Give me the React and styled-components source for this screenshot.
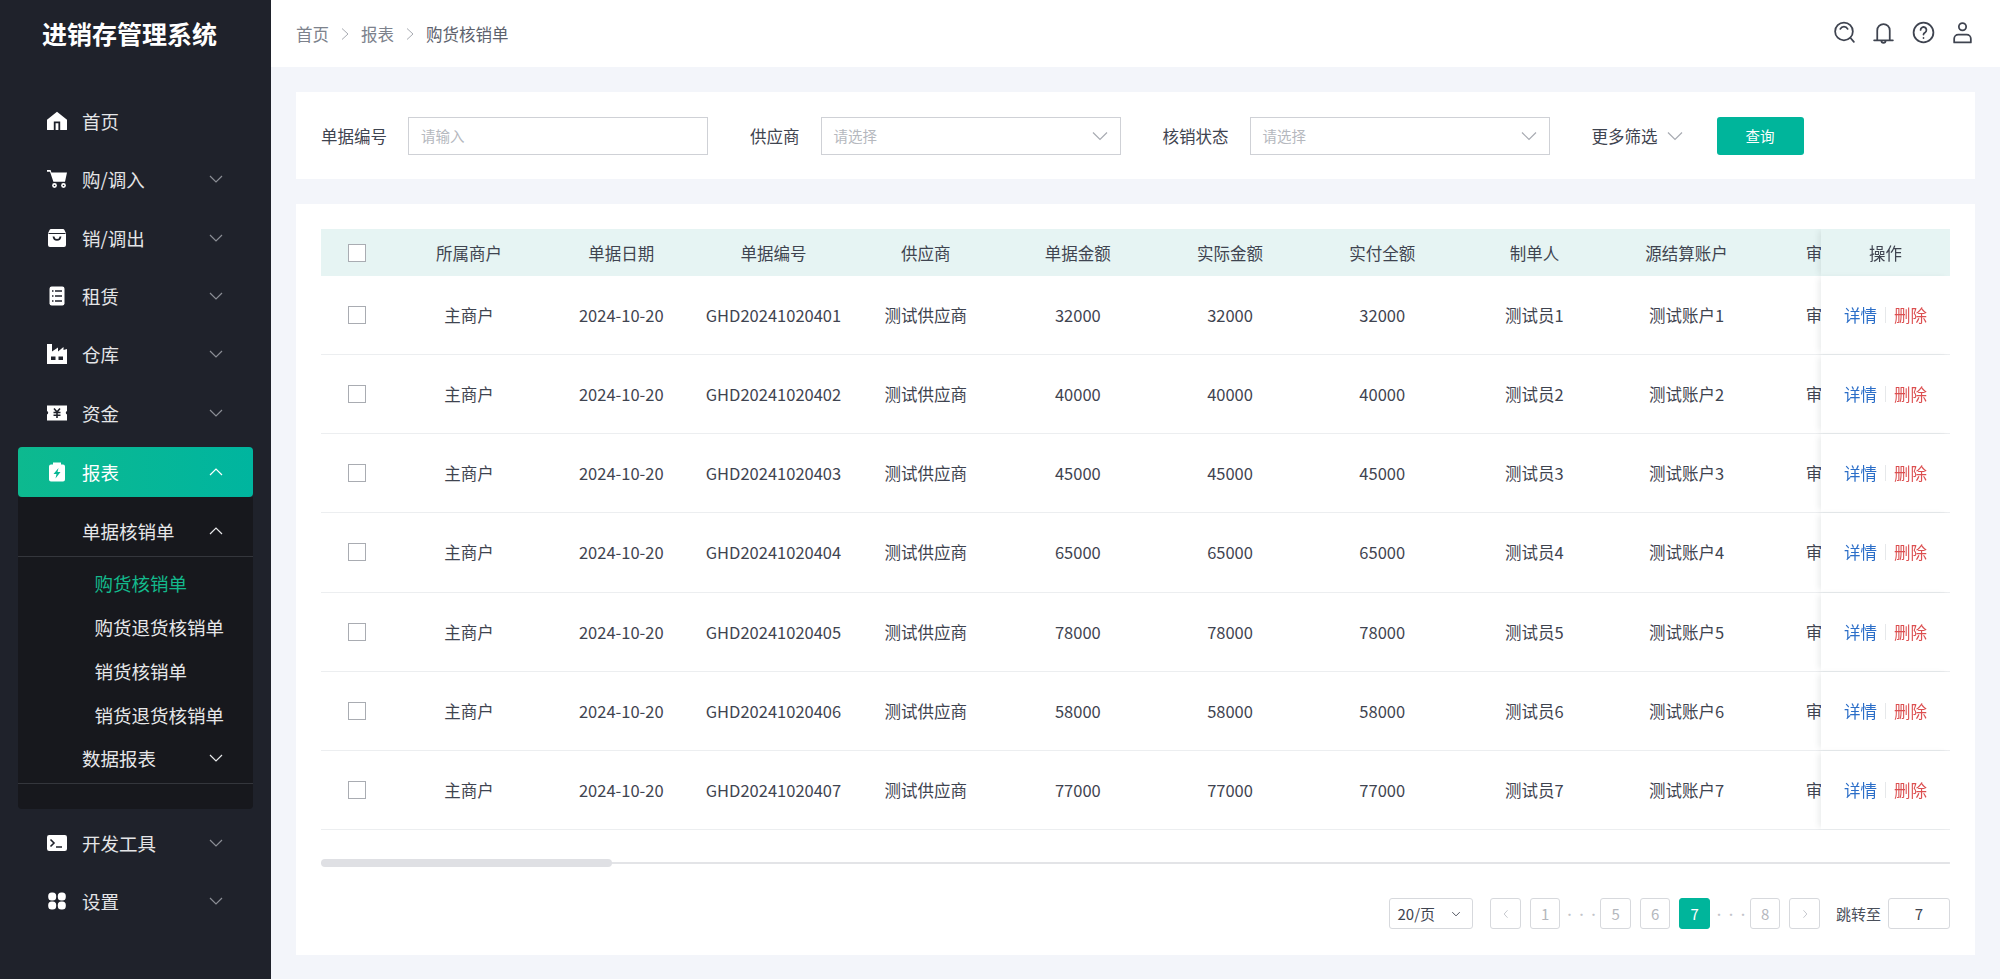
import React from "react";
import styled, { createGlobalStyle } from "styled-components";

const FONT = `"Noto Sans CJK SC", "Noto Sans", sans-serif`;
const TEAL = "#00b59b";

const Global = createGlobalStyle`
  html, body { margin: 0; padding: 0; height: 979px; overflow: hidden; background: #f3f5fa; font-family: ${FONT}; }
  * { box-sizing: border-box; }
`;

const Shell = styled.div`display: flex; width: 2000px; height: 979px; overflow: hidden;`;
const Sidebar = styled.aside`width: 271px; flex: none; background: #1f222b; display: flex; flex-direction: column; color: #e8e9eb;`;
const Logo = styled.div`height: 67px; padding: 0 0 2px 42px; display: flex; align-items: center; font-size: 25px; line-height: 36px; font-weight: 700; color: #fff;`;
const Nav = styled.nav`padding: 25px 18px 0; display: flex; flex-direction: column;`;
const NavRow = styled.div`
  height: ${p => (p.$active ? "50px" : "58.3px")};
  margin: ${p => (p.$active ? "5px 0 0" : "0")};
  display: flex; align-items: center; padding: 0 29px;
  font-size: 18.5px; line-height: 26px; border-radius: 4px;
  background: ${p => (p.$active ? "linear-gradient(90deg,#0db98f,#00b59f)" : "transparent")};
  color: ${p => (p.$active ? "#fff" : "#e4e5e7")};
`;
const NavIcon = styled.svg`width: 20px; height: 20px; margin-right: 15px; flex: none;`;
const NavLabel = styled.span`flex: 1;`;
const Chevron = styled.svg`width: 16px; height: 16px; flex: none; fill: none; stroke: ${p => p.$color || "#8b8e95"}; stroke-width: 1.2;`;
const SubPanel = styled.div`background: #17181d; border-radius: 0 0 4px 4px; height: 312px; margin-bottom: 5px; display: flex; flex-direction: column;`;
const SubHead = styled.div`
  height: ${p => p.$h}px; padding: ${p => p.$top || 0}px 29px ${p => p.$bottom || 0}px 64px; flex: none;
  display: flex; align-items: center;
  font-size: 18.5px; line-height: 26px; color: #e6e7e9; border-bottom: 1px solid #34363c;
`;
const SubItem = styled.div`height: 44px; flex: none; display: flex; align-items: center; padding-left: 76.5px; font-size: 18.5px; line-height: 26px; color: ${p => (p.$active ? "#13b98c" : "#e6e7e9")};`;
const SubList = styled.div`padding-top: 4.5px; display: flex; flex-direction: column;`;

const Main = styled.main`flex: 1; min-width: 0; display: flex; flex-direction: column;`;
const Topbar = styled.header`height: 67px; flex: none; background: #fff; display: flex; align-items: center; justify-content: space-between; padding: 0 25px;`;
const Crumbs = styled.div`display: flex; align-items: center; font-size: 16.5px; line-height: 24px; color: #7d828c;`;
const CrumbSep = styled.svg`width: 14px; height: 14px; margin: 0 9px; fill: none; stroke: #a8abb2; stroke-width: 1;`;
const CrumbLast = styled.span`color: #5d626d;`;
const TopIcons = styled.div`display: flex; gap: 14.5px; align-items: center; padding-bottom: 2px;`;
const TopIcon = styled.svg`width: 25px; height: 25px; fill: none; stroke: #3f4450; stroke-width: 1.7; stroke-linecap: round; stroke-linejoin: round;`;

const Content = styled.div`flex: 1; padding: 25px 25px 0; display: flex; flex-direction: column; gap: 25px;`;
const FilterCard = styled.section`height: 87px; background: #fff; display: flex; align-items: center; padding: 0 25px;`;
const Label = styled.span`font-size: 16.5px; line-height: 24px; color: #3f4450; margin-left: ${p => p.$ml || 0}px; margin-right: 21px; white-space: nowrap;`;
const Field = styled.div`width: 300px; height: 38px; border: 1px solid #cfd1d6; background: #fff; display: flex; align-items: center; justify-content: space-between; padding: 0 12px; font-size: 14.5px; line-height: 20px; color: #b5b8be;`;
const MoreChev = styled(Chevron)`margin-left: 9px; stroke: #a8abb2;`;
const QueryBtn = styled.button`width: 87px; height: 38px; margin-left: 34px; border: none; border-radius: 3px; background: ${TEAL}; color: #fff; font: 14.5px/20px ${FONT}; padding: 0;`;
const More = styled.div`display: flex; align-items: center; margin-left: 42px; font-size: 16.5px; line-height: 24px; color: #3f4450;`;

const TableCard = styled.section`height: 751px; background: #fff; padding: 25px; display: flex; flex-direction: column;`;
const TableScroll = styled.div`width: 1629px; overflow: hidden;`;
const Row = styled.div`
  display: flex; width: max-content; height: ${p => (p.$head ? 47 : 79.15)}px;
  background: ${p => (p.$head ? "#e6f4f3" : "#fff")};
  border-bottom: ${p => (p.$head ? "none" : "1px solid #eceef0")};
  font-size: 16.5px; line-height: 24px; color: #3f4450;
`;
const CheckCell = styled.div`width: 72px; flex: none; display: flex; align-items: center; justify-content: center;`;
const Box = styled.span`width: 18px; height: 18px; border: 1px solid #a9acb2; background: #fff; display: block;`;
const Cell = styled.div`width: 152.2px; flex: none; display: flex; align-items: center; justify-content: center; white-space: nowrap;`;
const OpCell = styled.div`
  width: 129px; flex: none; position: sticky; right: 0; display: flex; align-items: center; justify-content: center;
  background: ${p => (p.$head ? "#e6f4f3" : "#fff")};
  box-shadow: -4px 0 6px -2px rgba(40,60,60,.10);
`;
const Detail = styled.span`color: #2b6ec8;`;
const Delete = styled.span`color: #dc4f50;`;
const OpDivider = styled.span`width: 1px; height: 16px; background: #e6e8ea; margin: 0 8px;`;

const Scrollbar = styled.div`margin-top: 29px; height: 8px; display: flex; align-items: center; background: linear-gradient(#e3e4e7,#e3e4e7) center/100% 2px no-repeat; border-radius: 4px;`;
const Thumb = styled.div`width: 291px; height: 8px; border-radius: 4px; background: #dfe0e4;`;

const Pager = styled.div`margin-top: 31px; display: flex; align-items: center; justify-content: flex-end; height: 32px; font-size: 15px; line-height: 20px; color: #3f4450;`;
const SizeSelect = styled.div`width: 84px; height: 31px; border: 1px solid #d7d9dd; border-radius: 3px; display: flex; align-items: center; justify-content: space-between; padding: 0 10px 0 7px; margin-right: 17px;`;
const SizeChev = styled(Chevron)`width: 12px; height: 12px; stroke: #3f4450;`;
const PageBtn = styled.div`
  width: 30.5px; height: 31px; border-radius: 3px; margin-left: ${p => p.$ml ?? 9}px; display: flex; align-items: center; justify-content: center;
  border: 1px solid ${p => (p.$active ? TEAL : "#d7d9dd")};
  background: ${p => (p.$active ? TEAL : "#fff")};
  color: ${p => (p.$active ? "#fff" : "#b4b7bd")};
`;
const Dots = styled.div`width: 40px; padding-left: 3px; text-align: center; color: #c2c4c9; letter-spacing: 1px; font-size: 11px; line-height: 14px; height: 14px; flex: none;`;
const ArrowIcon = styled(Chevron)`width: 10px; height: 10px;`;
const JumpLabel = styled.span`margin-left: 16px; margin-right: 7px; color: #4a4f5a;`;
const JumpInput = styled.div`width: 62px; height: 31px; border: 1px solid #d7d9dd; border-radius: 3px; display: flex; align-items: center; justify-content: center;`;

const Down = () => <Chevron viewBox="0 0 16 16"><path d="M2 5l6 6 6-6" /></Chevron>;
const Up = () => <Chevron viewBox="0 0 16 16" $color="#e8e9eb"><path d="M2 11l6-6 6 6" /></Chevron>;
const UpW = () => <Chevron viewBox="0 0 16 16" $color="#fff"><path d="M2 11l6-6 6 6" /></Chevron>;
const DownL = () => <Chevron viewBox="0 0 16 16" $color="#e8e9eb"><path d="M2 5l6 6 6-6" /></Chevron>;
const FieldChev = () => <Chevron viewBox="0 0 16 16" $color="#a8abb2"><path d="M1 4.500l7 7 7-7" /></Chevron>;

const ICONS = {
  home: c => <><path fill="#fff" d="M10 .8 20 8.800V18.500a.6.6 0 0 1-.6.600H.6a.6.600 0 0 1-.6-.600V8.800z" /><path fill={c} d="M6.800 19v-8.500h6.400V19h-1.800v-6.700H8.600V19z" /></>,
  cart: c => <><path fill="#fff" d="M0 1h3.600l.8 2.600H20l-2 9.200H6.400L3 2.800H0z" /><circle cx="7.500" cy="16.500" r="2.400" fill="#fff" /><circle cx="16.500" cy="16.500" r="2.400" fill="#fff" /><circle cx="7.500" cy="16.500" r=".8" fill={c} /><circle cx="16.500" cy="16.500" r=".8" fill={c} /></>,
  bag: c => <><path fill="#fff" d="M4 1h12a1.500 1.500 0 0 1 1.300.700L19 5.200V17a2 2 0 0 1-2 2H3a2 2 0 0 1-2-2V5.200L2.700 1.700A1.500 1.500 0 0 1 4 1z" /><path fill="none" stroke={c} strokeWidth="1" d="M1.500 5.500h17" /><path fill="none" stroke={c} strokeWidth="1.800" d="M6.500 8.500c.5 4.500 6.500 4.500 7 0" /></>,
  list: c => <><rect x="2.500" y=".5" width="15" height="19" rx="2.200" fill="#fff" /><path stroke={c} strokeWidth="1.500" d="M5 5h1.500M8 5h7M5 10h1.500M8 10h7M5 15h1.500M8 15h7" /></>,
  factory: c => <><path fill="#fff" d="M0 0h5v7.500L11 3.500v4l5.500-4.500V6l3.500-1V20H0z" /><path fill={c} d="M4 12.500h4.500V16H4zM11.500 12.500H16V16h-4.500z" /></>,
  money: c => <><path fill="#fff" d="M0 2.500h20V8a1.800 1.800 0 0 0 0 3.400v6.100H0v-6.100A1.800 1.800 0 0 0 0 8z" /><path fill="none" stroke={c} strokeWidth="1.600" d="M7 5.500l3 3.500 3-3.500M6.500 9.500h7M6.500 12.300h7M10 9v6" /></>,
  report: c => <><path fill="#fff" d="M6 .5h8v2h2a2 2 0 0 1 2 2V17.500a2 2 0 0 1-2 2H4a2 2 0 0 1-2-2V4.500a2 2 0 0 1 2-2h2z" /><path fill={c} d="M11.500 6 6.500 12h3l-1 4.500 5-6.500h-3z" /></>,
  term: c => <><rect x="0" y="2" width="20" height="16" rx="2.200" fill="#fff" /><path fill="none" stroke={c} strokeWidth="1.600" d="M3.500 6.500 7 10l-3.500 3.500M9 14h6" /></>,
  grid: () => <><rect x="1.200" y="1.500" width="8" height="8" rx="3.500" fill="#fff" /><rect x="10.800" y="1.500" width="8" height="8" rx="3.500" fill="#fff" /><rect x="1.200" y="10.500" width="8" height="8" rx="3.500" fill="#fff" /><rect x="10.800" y="10.500" width="8" height="8" rx="3.500" fill="#fff" /></>,
};

const Icon = ({ name, cut = "#1f222b" }) => <NavIcon viewBox="0 0 20 20">{ICONS[name](cut)}</NavIcon>;

const before = [["home", "首页", false], ["cart", "购/调入", true], ["bag", "销/调出", true], ["list", "租赁", true], ["factory", "仓库", true], ["money", "资金", true]];
const after = [["term", "开发工具"], ["grid", "设置"]];
const subs = ["购货核销单", "购货退货核销单", "销货核销单", "销货退货核销单"];
const cols = ["所属商户", "单据日期", "单据编号", "供应商", "单据金额", "实际金额", "实付全额", "制单人", "源结算账户", "审核状态"];
const amounts = [32000, 40000, 45000, 65000, 78000, 58000, 77000];

export default function App() {
  return (
    <Shell>
      <Global />
      <Sidebar>
        <Logo>进销存管理系统</Logo>
        <Nav>
          {before.map(([i, t, c]) => (
            <NavRow key={t}><Icon name={i} /><NavLabel>{t}</NavLabel>{c && <Down />}</NavRow>
          ))}
          <NavRow $active><Icon name="report" cut="#08b795" /><NavLabel>报表</NavLabel><UpW /></NavRow>
          <SubPanel>
            <SubHead $h={60} $top={10}><NavLabel>单据核销单</NavLabel><Up /></SubHead>
            <SubList>
              {subs.map((s, i) => <SubItem key={s} $active={i === 0}>{s}</SubItem>)}
            </SubList>
            <SubHead $h={47} $bottom={4}><NavLabel>数据报表</NavLabel><DownL /></SubHead>
          </SubPanel>
          {after.map(([i, t]) => (
            <NavRow key={t}><Icon name={i} /><NavLabel>{t}</NavLabel><Down /></NavRow>
          ))}
        </Nav>
      </Sidebar>
      <Main>
        <Topbar>
          <Crumbs>
            <span>首页</span>
            <CrumbSep viewBox="0 0 14 14"><path d="M4 1.500 10 7l-6 5.500" /></CrumbSep>
            <span>报表</span>
            <CrumbSep viewBox="0 0 14 14"><path d="M4 1.500 10 7l-6 5.500" /></CrumbSep>
            <CrumbLast>购货核销单</CrumbLast>
          </Crumbs>
          <TopIcons>
            <TopIcon viewBox="0 0 24 24"><circle cx="11.500" cy="11" r="8.500" /><path d="M8 8.500c.8-1.500 2-2.200 3.500-2.200s2.700.7 3.500 2.200M18 17.500l3 3.500" /></TopIcon>
            <TopIcon viewBox="0 0 24 24"><path d="M6 19V10a6 6 0 0 1 12 0v9M3 19.500h18M10 20a2 2 0 0 0 4 0" /></TopIcon>
            <TopIcon viewBox="0 0 24 24"><circle cx="12" cy="12" r="9.500" /><path d="M9.200 9.500a2.800 2.800 0 1 1 4.300 2.400c-1 .6-1.500 1.100-1.500 2.100M12 17.200v.1" /></TopIcon>
            <TopIcon viewBox="0 0 24 24"><circle cx="12" cy="6.500" r="3.500" /><path d="M4 21.500v-3.500a4 4 0 0 1 4-4h8a4 4 0 0 1 4 4v3.500zM4 21.500h16" /></TopIcon>
          </TopIcons>
        </Topbar>
        <Content>
          <FilterCard>
            <Label>单据编号</Label>
            <Field>请输入</Field>
            <Label $ml={42}>供应商</Label>
            <Field>请选择<FieldChev /></Field>
            <Label $ml={42}>核销状态</Label>
            <Field>请选择<FieldChev /></Field>
            <More>更多筛选<MoreChev viewBox="0 0 16 16"><path d="M1 4.500l7 7 7-7" /></MoreChev></More>
            <QueryBtn>查询</QueryBtn>
          </FilterCard>
          <TableCard>
            <TableScroll>
              <Row $head>
                <CheckCell><Box /></CheckCell>
                {cols.map(c => <Cell key={c}>{c}</Cell>)}
                <OpCell $head>操作</OpCell>
              </Row>
              {amounts.map((a, i) => (
                <Row key={a}>
                  <CheckCell><Box /></CheckCell>
                  <Cell>主商户</Cell>
                  <Cell>2024-10-20</Cell>
                  <Cell>GHD2024102040{i + 1}</Cell>
                  <Cell>测试供应商</Cell>
                  <Cell>{a}</Cell>
                  <Cell>{a}</Cell>
                  <Cell>{a}</Cell>
                  <Cell>测试员{i + 1}</Cell>
                  <Cell>测试账户{i + 1}</Cell>
                  <Cell>审核通过</Cell>
                  <OpCell><Detail>详情</Detail><OpDivider /><Delete>删除</Delete></OpCell>
                </Row>
              ))}
            </TableScroll>
            <Scrollbar><Thumb /></Scrollbar>
            <Pager>
              <SizeSelect>20/页<SizeChev viewBox="0 0 16 16"><path d="M3 5.500l5 5 5-5" /></SizeChev></SizeSelect>
              <PageBtn $ml={0}><ArrowIcon viewBox="0 0 16 16" $color="#b4b7bd"><path d="M10.500 2l-5.500 6 5.500 6" /></ArrowIcon></PageBtn>
              <PageBtn>1</PageBtn>
              <Dots>···</Dots>
              <PageBtn $ml={0}>5</PageBtn>
              <PageBtn>6</PageBtn>
              <PageBtn $active>7</PageBtn>
              <Dots>···</Dots>
              <PageBtn $ml={0}>8</PageBtn>
              <PageBtn><ArrowIcon viewBox="0 0 16 16" $color="#b4b7bd"><path d="M5.500 2l5.500 6-5.500 6" /></ArrowIcon></PageBtn>
              <JumpLabel>跳转至</JumpLabel>
              <JumpInput>7</JumpInput>
            </Pager>
          </TableCard>
        </Content>
      </Main>
    </Shell>
  );
}
